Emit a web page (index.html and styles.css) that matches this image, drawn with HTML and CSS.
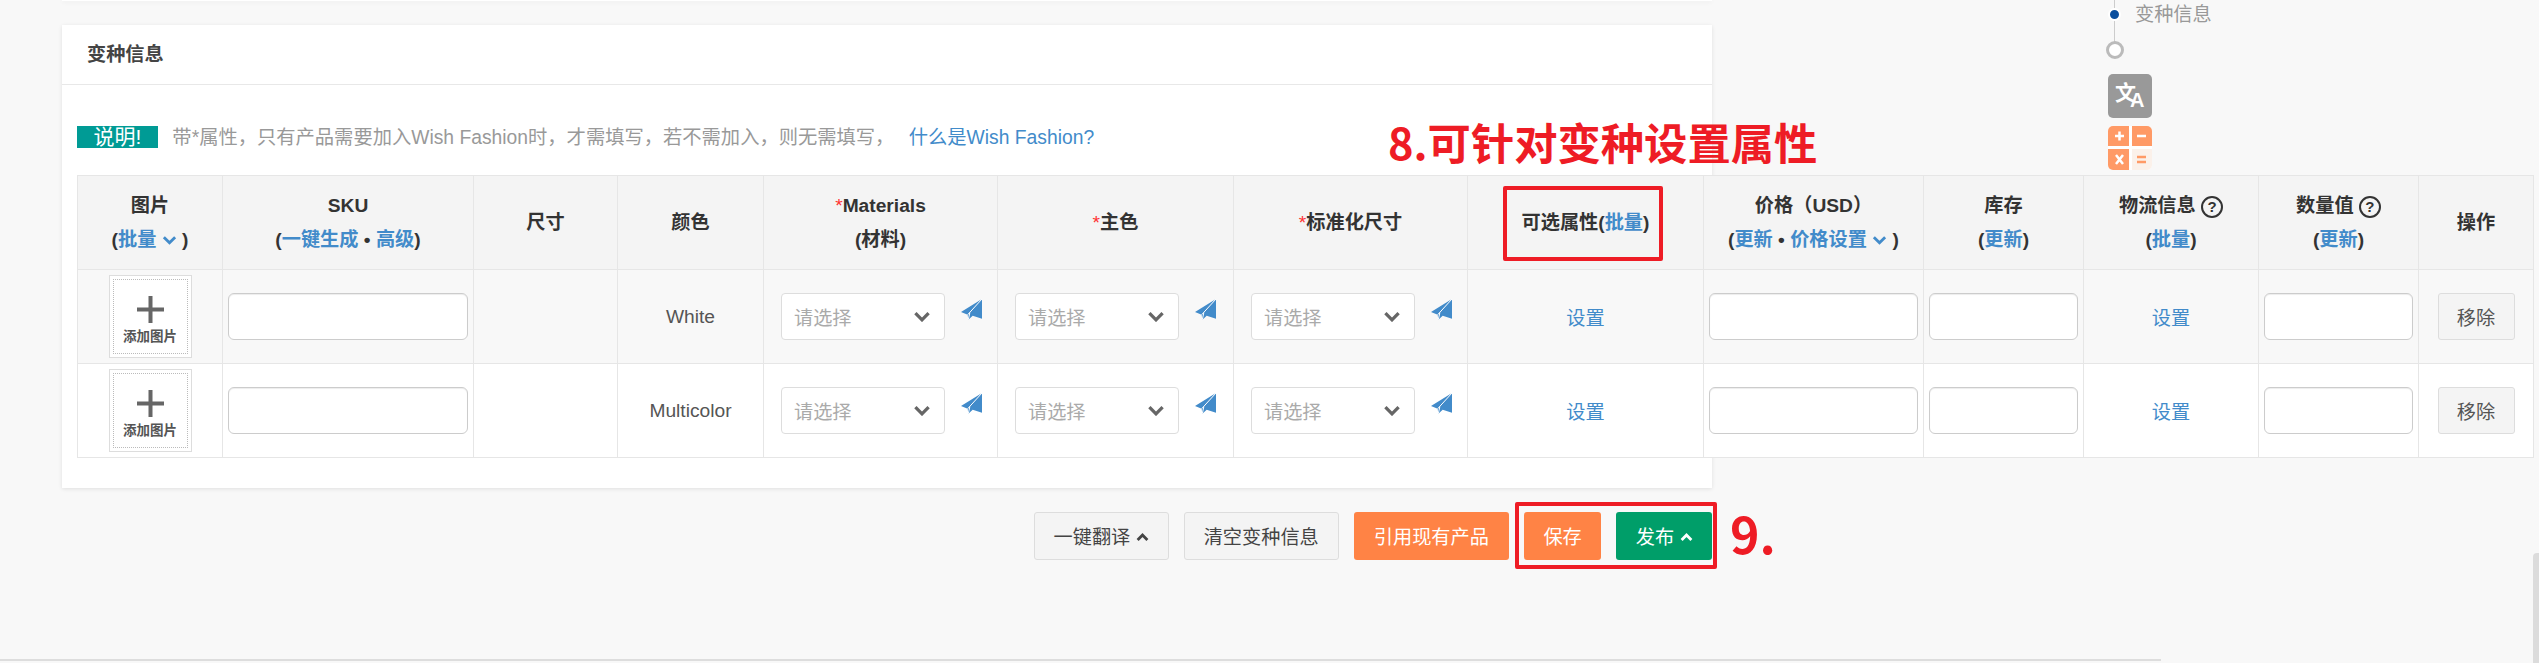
FILE: index.html
```html
<!DOCTYPE html>
<html lang="zh">
<head>
    <meta charset="UTF-8">
    <meta name="viewport" content="width=device-width, initial-scale=1.0">
    <title>变种信息</title>
    <link rel="stylesheet" href="styles.css">
</head>
<body>
    <svg class="defs" width="0" height="0">
        <symbol id="down" viewBox="0 0 16 10"><path d="M2 2l6 6 6-6" fill="none" stroke="currentColor" stroke-width="3"/></symbol>
        <symbol id="up" viewBox="0 0 16 10"><path d="M2 8l6-6 6 6" fill="none" stroke="currentColor" stroke-width="3.500"/></symbol>
        <symbol id="plane" viewBox="0 0 21 21">
            <path d="M21 0L0 13l6.700 2.700.6 5 4.400-4 9.300 3z" fill="#428bca"/>
            <path d="M21 0L6.700 15.700M7.300 20.700l1.500-7" fill="none" stroke="#fff" stroke-width="1"/>
        </symbol>
        <symbol id="plus" viewBox="0 0 27 27"><path d="M11.500 0h4v11.500H27v4H15.500V27h-4V15.500H0v-4h11.500z" fill="#666"/></symbol>
    </svg>

    <div class="page">
        <div class="top-card"></div>

        <div class="card">
            <div class="card-head">变种信息</div>
            <div class="card-body">
                <p class="note">
                    <span class="note-tag">说明!</span>
                    带*属性，只有产品需要加入Wish Fashion时，才需填写，若不需加入，则无需填写，
                    <a href="#" class="note-link">什么是Wish Fashion?</a>
                </p>

                <table class="variants">
                    <colgroup>
                        <col class="c145"><col class="c251"><col class="c144"><col class="c146">
                        <col class="c234"><col class="c236"><col class="c234"><col class="c236">
                        <col class="c220"><col class="c160"><col class="c175"><col class="c160"><col class="c115">
                    </colgroup>
                    <thead>
                        <tr>
                            <th>图片<br>(<a href="#">批量 <svg class="chev"><use href="#down"/></svg></a> )</th>
                            <th>SKU<br>(<a href="#">一键生成</a> • <a href="#">高级</a>)</th>
                            <th>尺寸</th>
                            <th>颜色</th>
                            <th><span class="req">*</span>Materials<br>(材料)</th>
                            <th><span class="req">*</span>主色</th>
                            <th><span class="req">*</span>标准化尺寸</th>
                            <th>可选属性(<a href="#">批量</a>)</th>
                            <th>价格（USD）<br>(<a href="#">更新</a> • <a href="#">价格设置 <svg class="chev"><use href="#down"/></svg></a> )</th>
                            <th>库存<br>(<a href="#">更新</a>)</th>
                            <th>物流信息 <span class="help">?</span><br>(<a href="#">批量</a>)</th>
                            <th>数量值 <span class="help">?</span><br>(<a href="#">更新</a>)</th>
                            <th>操作</th>
                        </tr>
                    </thead>
                    <tbody>
                        <tr>
                            <td>
                                <div class="pic-box"><div class="pic-inner">
                                    <svg class="pic-plus"><use href="#plus"/></svg>
                                    <span>添加图片</span>
                                </div></div>
                            </td>
                            <td><input type="text" class="field"></td>
                            <td></td>
                            <td>White</td>
                            <td><div class="pick"><div class="select">请选择<svg class="select-arrow"><use href="#down"/></svg></div><svg class="plane"><use href="#plane"/></svg></div></td>
                            <td><div class="pick"><div class="select">请选择<svg class="select-arrow"><use href="#down"/></svg></div><svg class="plane"><use href="#plane"/></svg></div></td>
                            <td><div class="pick"><div class="select">请选择<svg class="select-arrow"><use href="#down"/></svg></div><svg class="plane"><use href="#plane"/></svg></div></td>
                            <td><a href="#">设置</a></td>
                            <td><input type="text" class="field"></td>
                            <td><input type="text" class="field"></td>
                            <td><a href="#">设置</a></td>
                            <td><input type="text" class="field"></td>
                            <td><button type="button" class="remove-btn">移除</button></td>
                        </tr>
                        <tr>
                            <td>
                                <div class="pic-box"><div class="pic-inner">
                                    <svg class="pic-plus"><use href="#plus"/></svg>
                                    <span>添加图片</span>
                                </div></div>
                            </td>
                            <td><input type="text" class="field"></td>
                            <td></td>
                            <td>Multicolor</td>
                            <td><div class="pick"><div class="select">请选择<svg class="select-arrow"><use href="#down"/></svg></div><svg class="plane"><use href="#plane"/></svg></div></td>
                            <td><div class="pick"><div class="select">请选择<svg class="select-arrow"><use href="#down"/></svg></div><svg class="plane"><use href="#plane"/></svg></div></td>
                            <td><div class="pick"><div class="select">请选择<svg class="select-arrow"><use href="#down"/></svg></div><svg class="plane"><use href="#plane"/></svg></div></td>
                            <td><a href="#">设置</a></td>
                            <td><input type="text" class="field"></td>
                            <td><input type="text" class="field"></td>
                            <td><a href="#">设置</a></td>
                            <td><input type="text" class="field"></td>
                            <td><button type="button" class="remove-btn">移除</button></td>
                        </tr>
                    </tbody>
                </table>
            </div>
        </div>

        <div class="actions">
            <button type="button" class="btn btn-plain">一键翻译 <svg class="chev-up"><use href="#up"/></svg></button>
            <button type="button" class="btn btn-plain">清空变种信息</button>
            <button type="button" class="btn btn-orange">引用现有产品</button>
            <button type="button" class="btn btn-orange btn-tight">保存</button>
            <button type="button" class="btn btn-green btn-tight">发布 <svg class="chev-up"><use href="#up"/></svg></button>
        </div>

        <div class="page-line"></div>

        <aside class="rail">
            <div class="rail-step"><span class="rail-dot"></span><span class="rail-label">变种信息</span></div>
            <div class="rail-ring"></div>
            <svg class="rail-icon" viewBox="0 0 44 44">
                <rect width="44" height="44" rx="5" fill="#999"/>
                <text x="7" y="26" class="t-wen">文<tspan dx="-6" dy="7" class="t-a">A</tspan></text>
            </svg>
            <svg class="rail-icon calc" viewBox="0 0 44 44">
                <rect width="44" height="44" rx="5" fill="#fff"/>
                <path d="M5 0h16v20H0V5a5 5 0 0 1 5-5z" fill="#ff9a66"/>
                <path d="M24 0h15a5 5 0 0 1 5 5v15H24z" fill="#ff9a66"/>
                <path d="M0 23h21v21H5a5 5 0 0 1-5-5z" fill="#ff9a66"/>
                <path d="M24 23h20v16a5 5 0 0 1-5 5H24z" fill="#fbf1ea"/>
                <path d="M7 10h9M11.500 5.500v9M29 10h9" stroke="#fff" stroke-width="2.500" fill="none"/>
                <path d="M8 29l7 9M15 29l-7 9" stroke="#fff" stroke-width="2.500" fill="none"/>
                <path d="M29 31h9M29 36h9" stroke="#ff9a66" stroke-width="2.500" fill="none"/>
            </svg>
        </aside>

        <div class="mark mark-attr"></div>
        <div class="mark mark-save"></div>
        <div class="tip tip-attr">8.可针对变种设置属性</div>
        <div class="tip tip-save">9.</div>
        <div class="scroll-thumb"></div>
    </div>
</body>
</html>
```

FILE: styles.css
```css
* {
    margin: 0;
    padding: 0;
    box-sizing: border-box;
}

html, body {
    height: 100%;
    overflow: hidden;
}

body {
    font-family: "Liberation Sans", "Noto Sans CJK SC", sans-serif;
    font-size: 19.200px;
    color: #555;
    background-color: #f8f8f8;
}

a {
    color: #428bca;
    text-decoration: none;
}

.defs {
    position: absolute;
}

.page {
    position: relative;
    height: 663px;
}

.top-card {
    width: 1650px;
    height: 1px;
    margin-left: 62px;
    background: #fff;
    box-shadow: 0 1px 4px rgba(0, 0, 0, 0.1);
}

.card {
    width: 1650px;
    height: 463px;
    margin: 24px 0 0 62px;
    background: #fff;
    box-shadow: 0 1px 4px rgba(0, 0, 0, 0.1);
}

.card-head {
    height: 60px;
    padding-left: 25px;
    line-height: 60px;
    font-weight: bold;
    color: #444;
    border-bottom: 1px solid #e8e8e8;
}

.card-body {
    padding: 41px 15px 0;
}

.note {
    height: 22px;
    margin-bottom: 27px;
    line-height: 22px;
    font-size: 19.300px;
    color: #999;
    white-space: nowrap;
}

.note-tag {
    display: inline-block;
    width: 81px;
    height: 22px;
    margin-right: 9px;
    font-size: 21px;
    text-align: center;
    color: #fff;
    background: #009b95;
}

.note-link {
    margin-left: 9px;
}

/* 变种表格，宽度超出卡片 */
.variants {
    width: 2456px;
    table-layout: fixed;
    border-collapse: collapse;
}

.c145 { width: 145px; }
.c251 { width: 251px; }
.c144 { width: 144px; }
.c146 { width: 146px; }
.c234 { width: 234px; }
.c236 { width: 236px; }
.c220 { width: 220px; }
.c160 { width: 160px; }
.c175 { width: 175px; }
.c115 { width: 115px; }

.variants th,
.variants td {
    height: 94px;
    padding: 0 5px;
    text-align: center;
    border: 1px solid #e6e6e6;
}

.variants th {
    line-height: 34px;
    font-weight: bold;
    color: #333;
    background: #f4f4f4;
}

.variants tbody tr:nth-child(odd) {
    background: #f8f8f8;
}

.variants tbody tr:nth-child(even) {
    background: #fff;
}

.req {
    font-weight: normal;
    color: #f33;
}

.chev {
    width: 15px;
    height: 10px;
    vertical-align: 1px;
}

.help {
    display: inline-block;
    width: 22px;
    height: 22px;
    border: 2.500px solid #333;
    border-radius: 50%;
    line-height: 17px;
    font-size: 15px;
    vertical-align: 0;
}

.pic-box {
    width: 83px;
    height: 83px;
    margin: 0 auto;
    padding: 3px;
    background: #fff;
    border: 1px solid #ddd;
}

.pic-inner {
    display: flex;
    flex-direction: column;
    align-items: center;
    height: 100%;
    padding-top: 16px;
    border: 1px dotted #bbb;
}

.pic-plus {
    width: 27px;
    height: 27px;
}

.pic-inner span {
    margin-top: 5px;
    line-height: 18px;
    font-size: 13.500px;
    font-weight: bold;
    color: #555;
}

.field {
    display: block;
    width: 100%;
    height: 47px;
    background: #fff;
    border: 1px solid #ccc;
    border-radius: 6px;
    box-shadow: inset 0 1px 1px rgba(0, 0, 0, 0.075);
}

.pick {
    display: flex;
    gap: 16px;
    padding-left: 12px;
}

.select {
    display: flex;
    align-items: center;
    justify-content: space-between;
    width: 164px;
    height: 47px;
    padding: 0 13px 0 12px;
    color: #aaa;
    background: #fff;
    border: 1px solid #ddd;
    border-radius: 4px;
}

.select-arrow {
    width: 18px;
    height: 11px;
    color: #666;
}

.plane {
    width: 21px;
    height: 21px;
    margin-top: 6px;
}

.remove-btn {
    width: 77px;
    height: 47px;
    font: inherit;
    color: #555;
    background: #f4f4f4;
    border: 1px solid #ddd;
    border-radius: 3px;
}

.actions {
    display: flex;
    justify-content: flex-end;
    gap: 15px;
    width: 1712px;
    margin-top: 24px;
}

.btn {
    height: 48px;
    padding: 0 19px;
    font: inherit;
    border: 1px solid transparent;
    border-radius: 3px;
}

.btn-tight {
    padding: 0 18.500px;
}

.btn-plain {
    color: #444;
    background: #f4f4f4;
    border-color: #ddd;
}

.btn-orange {
    color: #fff;
    background: #ff8345;
}

.btn-green {
    color: #fff;
    background: #009e69;
}

.chev-up {
    width: 13px;
    height: 9px;
    vertical-align: 2px;
}

.page-line {
    width: 2161px;
    height: 2px;
    margin-top: 99px;
    background: #ddd;
}

/* 右侧导航 */
.rail {
    position: absolute;
    left: 2108px;
    top: 0;
    display: flex;
    flex-direction: column;
    width: 110px;
}

.rail::before {
    content: '';
    position: absolute;
    left: 6px;
    top: 0;
    width: 1px;
    height: 42px;
    background: #ccc;
}

.rail-step {
    position: relative;
    display: flex;
    align-items: center;
    height: 28px;
}

.rail-dot {
    width: 13px;
    height: 13px;
    background: #0b4f9e;
    border: 2px solid #fff;
    border-radius: 50%;
}

.rail-label {
    margin: -3px 0 0 14px;
    color: #999;
}

.rail-ring {
    position: relative;
    width: 18px;
    height: 18px;
    margin: 13px 0 0 -2px;
    background: #fff;
    border: 3px solid #bbb;
    border-radius: 50%;
}

.rail-icon {
    width: 44px;
    height: 44px;
    margin-top: 15px;
}

.rail-icon.calc {
    margin-top: 8px;
}

.t-wen {
    font-size: 21px;
    font-weight: bold;
    fill: #fff;
}

.t-a {
    font-size: 20px;
}

/* 红色标注 */
.mark {
    position: absolute;
    border: 4px solid #ee1c25;
    border-radius: 2px;
}

.mark-attr {
    left: 1503px;
    top: 186px;
    width: 160px;
    height: 75px;
}

.mark-save {
    left: 1515px;
    top: 502px;
    width: 202px;
    height: 67px;
}

.tip {
    position: absolute;
    font-family: "Noto Sans CJK SC", sans-serif;
    font-weight: bold;
    color: #ee1c25;
    white-space: nowrap;
}

.tip-attr {
    left: 1388px;
    top: 110px;
    line-height: 62px;
    font-size: 43.300px;
}

.tip-save {
    left: 1730px;
    top: 497px;
    line-height: 70px;
    font-size: 50px;
}

.scroll-thumb {
    position: absolute;
    right: 0;
    top: 553px;
    width: 6px;
    height: 110px;
    background: #dcdcdc;
    border-radius: 4px 0 0 0;
}
```
